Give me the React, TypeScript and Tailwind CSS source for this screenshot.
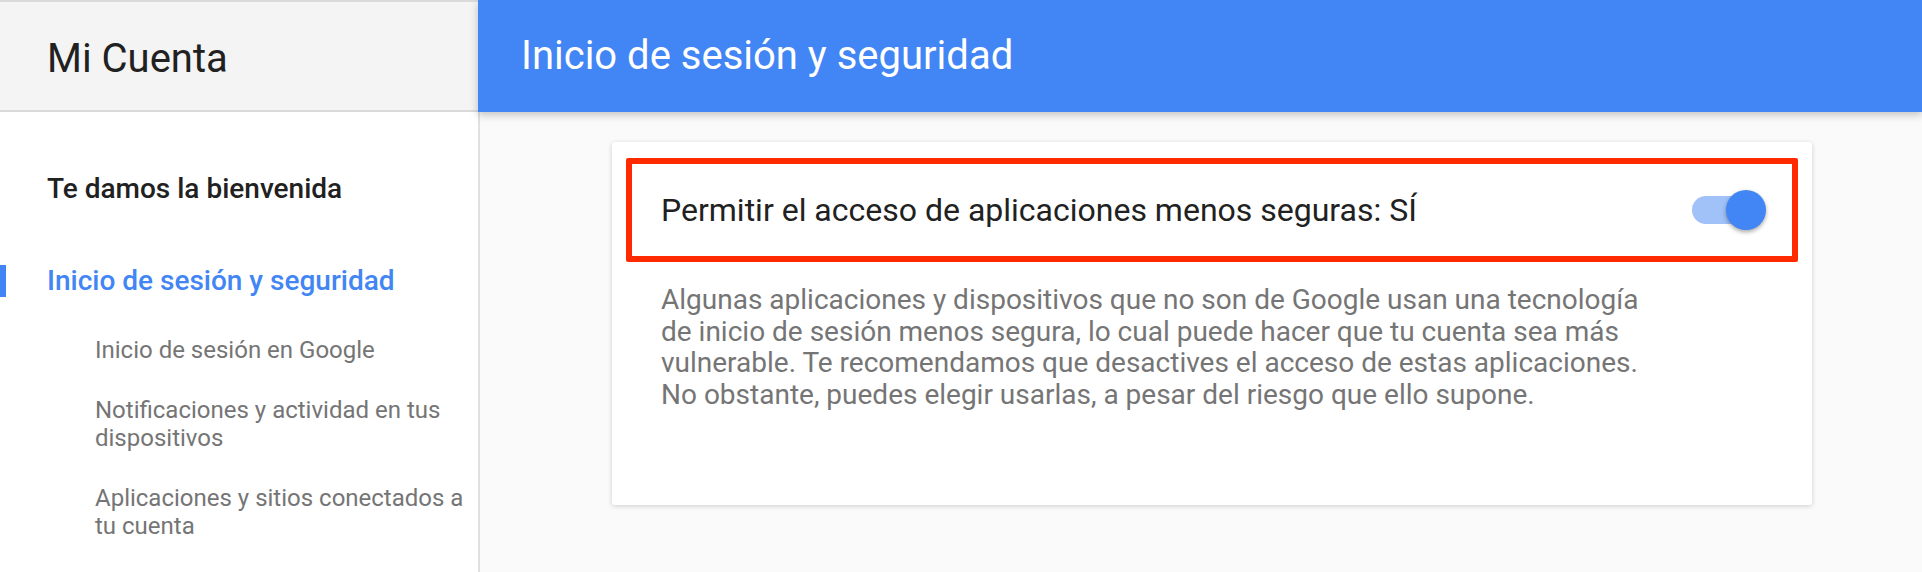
import React, {useState} from "react";

const SUB_ITEMS: string[] = [
    "Inicio de sesión en Google",
    "Notificaciones y actividad en tus dispositivos",
    "Aplicaciones y sitios conectados a tu cuenta",
];

export default function App() {
    const [allowLessSecure, setAllowLessSecure] = useState<boolean>(true);

    return (
        <div className="flex h-[572px] w-full flex-col overflow-hidden bg-[#fafafa] font-['Roboto',sans-serif]">
            {/* Top bar */}
            <div className="relative z-10 flex h-[112px] shrink-0">
                <div className="w-[478px] shrink-0 border-t-2 border-b-2 border-[#dadada] bg-[#f4f4f4] pl-[47px] pt-[33px]">
                    <h1 className="text-[40px] leading-[48px] text-[#212121]">Mi Cuenta</h1>
                </div>
                <div className="flex-1 bg-[#4285f4] pl-[43px] pt-[32px] shadow-[0_3px_8px_rgba(0,0,0,0.22)]">
                    <h2 className="text-[40px] leading-[48px] text-white">Inicio de sesión y seguridad</h2>
                </div>
            </div>

            <div className="flex flex-1">
                {/* Sidebar */}
                <nav className="w-[480px] shrink-0 border-r-2 border-[#e0e0e0] bg-white pt-[59px]">
                    <div className="pl-[47px] text-[28px] font-medium leading-[36px] text-[#212121]">
                        Te damos la bienvenida
                    </div>

                    <div className="relative mt-[56px] pl-[47px] text-[28px] font-medium leading-[36px] text-[#4285f4]">
                        <span className="absolute left-0 top-[2px] h-[32px] w-[6px] bg-[#4285f4]"></span>
                        Inicio de sesión y seguridad
                    </div>

                    <ul className="mt-[37px] flex flex-col gap-[32px] pl-[95px] pr-[8px] text-[24px] leading-[28px] text-[#757575]">
                        {SUB_ITEMS.map((item) => (
                            <li key={item}>{item}</li>
                        ))}
                    </ul>
                </nav>

                {/* Content */}
                <main className="flex-1 pl-[132px] pt-[30px]">
                    <div className="h-[363px] w-[1200px] rounded-[3px] bg-white px-[14px] pt-[16px] shadow-[0_1px_5px_rgba(0,0,0,0.18)]">
                        <div className="flex h-[104px] items-center justify-between rounded-[2px] border-[6px] border-[#ff2a00] pl-[29px] pr-[26px]">
                            <span className="text-[32px] leading-[40px] text-[#212121]">
                                Permitir el acceso de aplicaciones menos seguras: {allowLessSecure ? "SÍ" : "NO"}
                            </span>
                            <button
                                onClick={() => setAllowLessSecure(!allowLessSecure)}
                                className="relative h-[40px] w-[74px] shrink-0"
                            >
                                <span
                                    className={allowLessSecure
                                        ? "absolute left-0 top-[6px] h-[28px] w-[68px] rounded-full bg-[#a0c2f9]"
                                        : "absolute left-0 top-[6px] h-[28px] w-[68px] rounded-full bg-[#bdbdbd]"}
                                ></span>
                                <span
                                    className={allowLessSecure
                                        ? "absolute right-0 top-0 h-[40px] w-[40px] rounded-full bg-[#4285f4] shadow-[0_2px_4px_rgba(0,0,0,0.35)]"
                                        : "absolute left-[-6px] top-0 h-[40px] w-[40px] rounded-full bg-[#f1f1f1] shadow-[0_2px_4px_rgba(0,0,0,0.35)]"}
                                ></span>
                            </button>
                        </div>

                        <p className="mt-[22px] max-w-[1035px] pl-[35px] text-[28px] leading-[31.7px] text-[#757575]">
                            Algunas aplicaciones y dispositivos que no son de Google usan una tecnología de inicio de sesión menos segura, lo cual puede hacer que tu cuenta sea más vulnerable. Te recomendamos que desactives el acceso de estas aplicaciones. No obstante, puedes elegir usarlas, a pesar del riesgo que ello supone.
                        </p>
                    </div>
                </main>
            </div>
        </div>
    );
}
